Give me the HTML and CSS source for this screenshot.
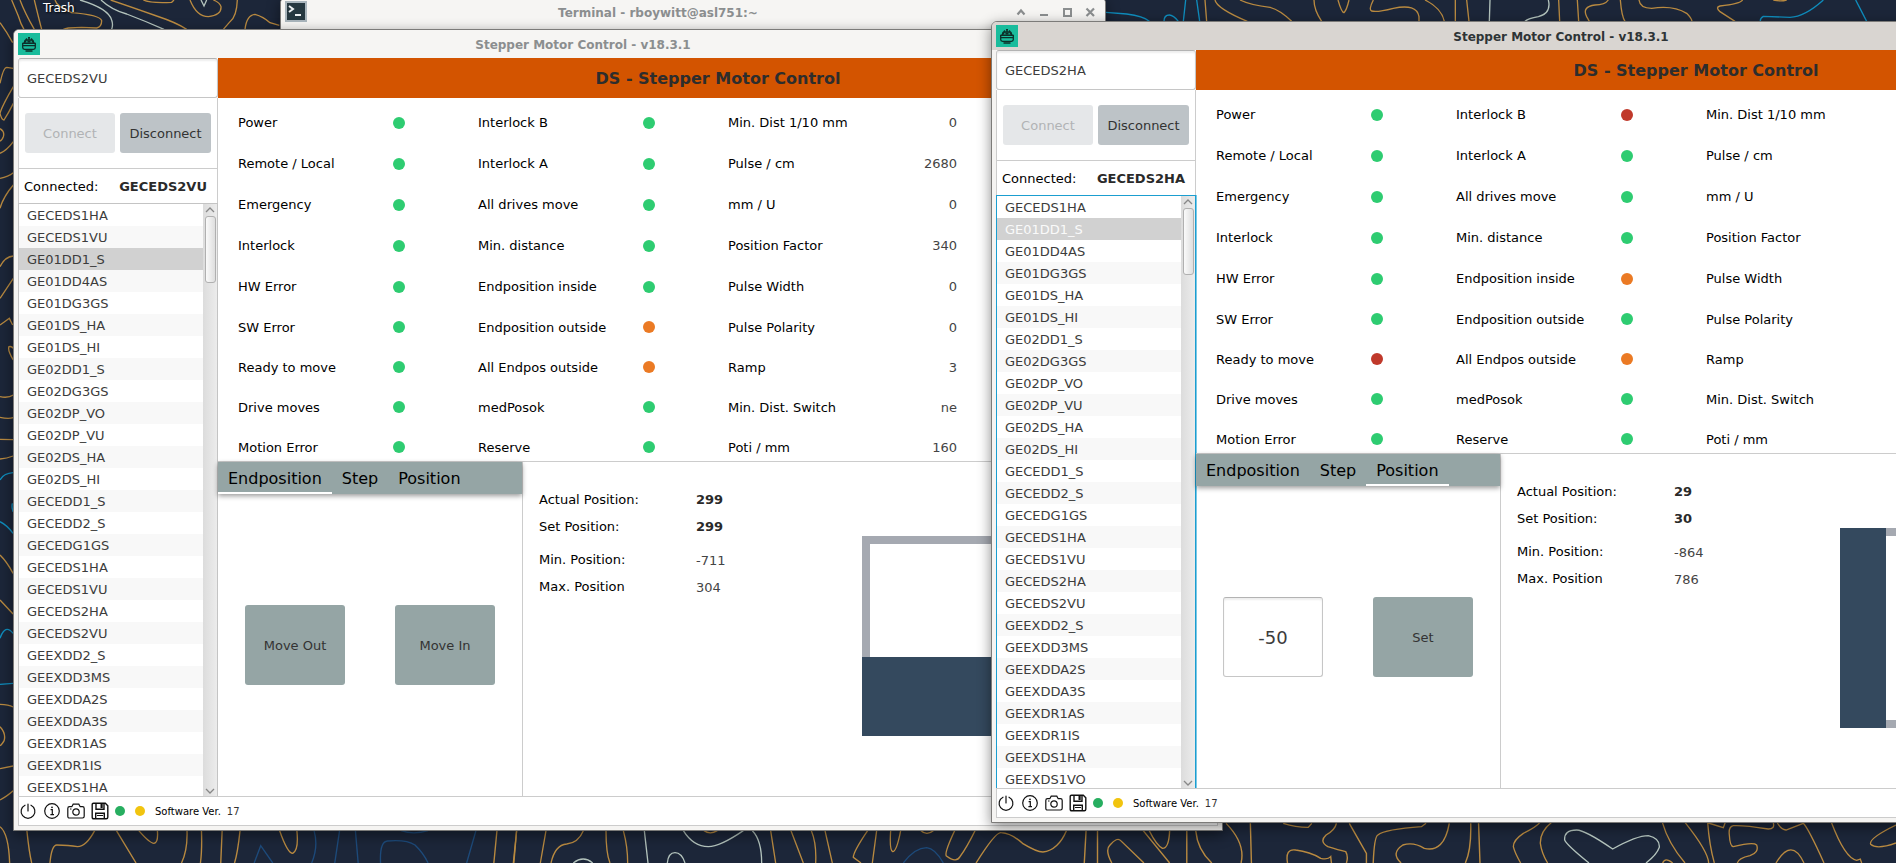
FILE: index.html
```html
<!DOCTYPE html>
<html lang="en">
<head>
<meta charset="utf-8">
<title>Stepper Motor Control</title>
<link rel="stylesheet" href="styles.css">
</head>
<body>
<svg class="symbols" aria-hidden="true">
  <symbol id="i-app" viewBox="0 0 22 22"><path fill="#1abc9c" d="M0 0h22v22H0z"/><g fill="none" stroke="#0c2f29" stroke-width="1.3"><path d="M11 4v3M8.500 5.200v1.600M13.500 5.200v1.600M6 10l1.500-3.200h7L16 10M4.700 10.300h12.600v4.200q0 1.800-1.800 1.800h-9q-1.800 0-1.800-1.800zM5 12.600h12M7.500 18h7"/></g><path fill="#0c2f29" d="M6.500 7.300h9l.8 2.400H5.700zM10 4h2v1.400h-2z"/><path stroke="#1abc9c" stroke-width="1" d="M8 8.800h1.600M12.400 8.800h1.600"/></symbol>
  <symbol id="i-up" viewBox="0 0 10 6"><path fill="none" stroke="#888" stroke-width="1.3" d="M1 5l4-4 4 4"/></symbol>
  <symbol id="i-down" viewBox="0 0 10 6"><path fill="none" stroke="#888" stroke-width="1.3" d="M1 1l4 4 4-4"/></symbol>
  <symbol id="i-shade" viewBox="0 0 10 10"><path fill="none" stroke="currentColor" stroke-width="2.200" d="M1.500 7.500L5 3.500l3.500 4"/></symbol>
  <symbol id="i-min" viewBox="0 0 10 10"><path fill="none" stroke="currentColor" stroke-width="2" d="M1 8h8"/></symbol>
  <symbol id="i-max" viewBox="0 0 10 10"><path fill="none" stroke="currentColor" stroke-width="2" d="M2 2h7v7H2z"/></symbol>
  <symbol id="i-close" viewBox="0 0 10 10"><path fill="none" stroke="currentColor" stroke-width="2.200" d="M1.500 1.500l7.500 7.500M9 1.500L1.500 9"/></symbol>
  <symbol id="i-power" viewBox="0 0 18 18"><path fill="none" stroke="#111" stroke-width="1.200" stroke-linecap="round" d="M9 2v7M6 3.200a6.900 6.900 0 1 0 6 0"/></symbol>
  <symbol id="i-info" viewBox="0 0 18 18"><g fill="none" stroke="#111" stroke-width="1.200"><circle cx="9" cy="9" r="7.300"/><path d="M7.600 7.600h1.700v5M7.400 12.700h3.600"/></g><circle cx="9" cy="5.300" r=".9" fill="#111"/></symbol>
  <symbol id="i-camera" viewBox="0 0 18 18"><g fill="none" stroke="#111" stroke-width="1.200"><path d="M2.500 4.700h2.300l1.400-2.500h5.600l1.400 2.500h2.300q1.700 0 1.700 1.700v7.900q0 1.700-1.700 1.700h-13Q.8 16 .8 14.300V6.400q0-1.700 1.700-1.700z"/><circle cx="9" cy="10" r="3.200"/><path d="M3 7h1.500"/></g></symbol>
  <symbol id="i-save" viewBox="0 0 18 18"><g fill="none" stroke="#111" stroke-width="1.400"><path d="M2.500 1.200h11.800l2.500 2.500v11.600q0 1.500-1.500 1.500H2.700q-1.500 0-1.500-1.500V2.500q0-1.300 1.300-1.300zM5 1.500v5.700h8V1.500M4.700 16.500v-5.300h8.600v5.300"/></g><path fill="#111" d="M9.500 2h2.200v4H9.500zM6 13h6v1H6z"/></symbol>
</svg>

<main class="desktop">
  <svg class="wallpaper" viewBox="0 0 1896 863" preserveAspectRatio="xMidYMid slice" aria-hidden="true">
    <g transform="scale(.33333)">
      <path class="amber" d="M0 68Q20 95 38 128M35 0L55 48Q62 72 72 88M60 0Q75 40 103 88M103 0Q115 50 125 88M165 0Q170 20 215 38Q300 45 305 62Q305 80 290 84L245 82 205 84Q195 86 190 88M332 0Q420 30 470 48 530 68 560 88M430 0Q450 10 515 7L522 0M570 0Q590 50 625 50 665 45 663 20 660 8 640 0M712 0Q710 50 690 65L670 88M735 88Q740 45 765 43 790 50 810 68L838 76"/>
      <path class="amber" d="M40 205L20 202Q10 202 0 250M40 260Q5 320 0 340 5 360 12 360 25 340 40 310M0 386Q15 395 10 410 5 422 0 423M0 460Q20 452 40 425M0 535Q25 530 40 518M0 625Q10 590 40 555M0 800Q15 770 40 768M0 895L40 835M0 975Q15 965 28 955L38 975M40 1080Q22 1050 27 1040 35 1038 40 1045M0 1190Q25 1195 40 1185M0 1252Q25 1258 40 1253"/>
      <path class="pale" d="M240 0Q325 25 335 60 340 75 335 88M303 0Q335 30 380 42 440 65 492 88M603 0L612 18 620 0"/>
    </g>
    <g transform="translate(0 420) scale(.34439 .33333)">
      <path class="amber" d="M0 58L38 59M0 117Q20 115 38 108M0 405Q20 425 38 460M0 540L38 582M0 853Q25 853 38 861M0 920Q18 940 12 962 5 975 0 977M0 1046L38 1038M0 1140Q25 1125 38 1112M0 1220Q25 1240 28 1329M78 1232Q85 1300 92 1329M145 1329Q150 1275 165 1275 200 1275 225 1280 250 1280 275 1232M338 1232L395 1329M403 1232Q435 1270 447 1270 460 1268 457 1232M527 1329Q545 1290 543 1232M585 1232Q587 1290 582 1329M645 1232L641 1329M697 1232Q690 1300 681 1329M812 1232Q835 1300 850 1300 868 1290 862 1232M1443 1232L1434 1329M1500 1232L1492 1329"/>
      <path class="cyan" d="M0 180Q10 160 38 158M36 250Q33 260 38 275M0 305Q20 315 38 340M0 655Q15 610 38 640M0 793L38 790"/>
      <path class="blue" d="M738 1329L757 1277 792 1329M912 1232Q925 1280 905 1329M986 1232L972 1329M1032 1232L1040 1329M1105 1329Q1102 1265 1125 1263 1180 1258 1205 1275 1230 1300 1243 1329M1165 1232Q1200 1245 1243 1232M1382 1232L1355 1329"/>
    </g>
    <g transform="translate(500 420) scale(.33333)">
      <path class="amber" d="M50 1232L40 1329M138 1232L121 1329M153 1329Q165 1275 200 1272 235 1268 250 1232M318 1232Q318 1300 330 1329M370 1232Q383 1280 383 1329M612 1232Q630 1245 652 1232M812 1232L827 1329M873 1232L910 1329M934 1232Q950 1270 947 1329M975 1232L997 1329M1103 1232Q1060 1295 1060 1312L1083 1329M1130 1232L1117 1329M1172 1232Q1168 1290 1178 1295 1190 1295 1202 1232M1263 1232Q1280 1248 1300 1232"/>
      <path class="pale" d="M433 1232L444 1329M220 1329Q250 1305 278 1329M550 1232Q580 1280 625 1280 660 1280 730 1232M757 1232Q785 1260 785 1329M502 1329Q505 1298 525 1298 545 1298 555 1329"/>
      <path class="blue" d="M1210 1329Q1245 1283 1280 1283 1305 1285 1330 1329"/>
    </g>
    <g transform="translate(960 420) scale(.35714 .33333)">
      <path class="amber" d="M0 1310Q20 1280 42 1232M-15 1232Q-45 1300-38 1308-10 1330 0 1310M45 1329Q100 1235 115 1238 145 1240 175 1270 215 1296 232 1296 275 1290 298 1232M353 1232L348 1329M385 1232V1329M425 1329Q405 1290 420 1275 440 1250 450 1262L515 1329M513 1232L587 1329M530 1232Q550 1275 567 1285 585 1285 587 1232M635 1232V1329M660 1232Q665 1290 705 1329M745 1210Q800 1270 787 1329M813 1210L816 1329M905 1210Q940 1222 975 1222L985 1210M917 1329Q910 1285 940 1290 980 1295 1010 1315 1030 1320 1038 1310L1040 1329M1054 1210Q1050 1230 1025 1245 1005 1265 1030 1280 1060 1290 1080 1295 1088 1310 1082 1329M1090 1210L1138 1300V1329M1157 1329Q1160 1250 1170 1245 1190 1228 1292 1220L1305 1210M1235 1329Q1205 1300 1240 1275 1270 1265 1300 1285 1355 1300 1370 1210M1430 1210Q1432 1290 1415 1329M1452 1210L1456 1329"/>
    </g>
    <g transform="translate(1380 815) scale(.33333)">
      <path class="amber" d="M480 22Q470 35 430 55 400 75 400 95 405 115 422 144M515 22Q480 50 481 85 485 115 503 144M847 22Q865 85 915 144M915 22Q985 110 986 144M983 22Q988 90 1003 144M985 24L1030 38 1036 22M1180 24Q1185 42 1165 42 1090 30 1060 32 1045 35 1048 60 1050 95 1060 95 1120 80 1130 90 1138 112 1110 122 1075 130 1072 144M1192 24Q1205 45 1218 45L1270 25Q1285 40 1332 144M1188 144Q1235 65 1272 144M1354 22Q1395 130 1430 136L1441 132 1445 144M1548 30Q1465 70 1472 88 1490 105 1548 84M848 144Q855 125 878 144"/>
      <path class="pale" d="M627 144Q560 90 554 75 552 45 590 45 615 45 698 102 770 62 805 62 840 70 838 97 830 120 798 144"/>
    </g>
    <g transform="translate(960) scale(.33333)">
      <path class="amber" d="M735 0L740 64M765 0Q770 25 862 64M840 0Q870 15 930 22 960 30 995 64M1062 0Q1062 30 1085 64M1134 0Q1145 38 1152 38 1160 30 1167 0M1240 0Q1225 30 1235 33 1250 38 1300 25 1370 10 1377 50V64M1395 0Q1445 25 1453 64"/>
      <path class="cyan" d="M438 37L500 42Q550 48 568 64M612 64Q612 45 628 45 640 45 655 64M677 0L670 64M710 0L719 64"/>
    </g>
    <g transform="translate(1440) scale(.33333)">
      <path class="amber" d="M46 0V64M80 0L87 64M356 0L359 64M412 0L416 64M505 0Q495 15 465 15 425 20 440 50L448 64M541 0Q545 50 555 64M597 0Q600 25 635 25 700 15 740 40 755 55 756 64M908 0Q900 12 840 18 825 22 840 35L885 64M1000 0Q1022 5 1040 0"/>
      <path class="pale" d="M150 0L148 64M325 0Q335 40 295 50 265 55 255 64"/>
      <path class="cyan" d="M1150 0Q1095 50 1050 52L970 49Q960 55 961 64M1247 0L1280 64"/>
    </g>
  </svg>

  <a class="desktop-item" href="#trash">Trash</a>

  <section class="window window-terminal" aria-label="Terminal">
    <header class="titlebar">
      <svg class="title-icon" viewBox="0 0 22 22" aria-hidden="true"><path fill="#263840" stroke="#a9b5bc" stroke-width="2" d="M1 1h20v19H1z"/><path fill="none" stroke="#eef1f2" stroke-width="2" d="M4 5l4 3-4 3M10 14h6"/></svg>
      <h2 class="title">Terminal - rboywitt@asl751:~</h2>
      <div class="controls">
        <button aria-label="Shade"><svg><use href="#i-shade"/></svg></button>
        <button aria-label="Minimize"><svg><use href="#i-min"/></svg></button>
        <button aria-label="Maximize"><svg><use href="#i-max"/></svg></button>
        <button aria-label="Close"><svg><use href="#i-close"/></svg></button>
      </div>
    </header>
  </section>

  <section class="window window-vu" aria-label="Stepper Motor Control GECEDS2VU">
    <header class="titlebar">
      <svg class="title-icon" aria-hidden="true"><use href="#i-app"/></svg>
      <h2 class="title">Stepper Motor Control - v18.3.1</h2>
      <div class="controls"></div>
    </header>
    <div class="content">
      <aside class="sidebar">
        <input class="entry" type="text" value="GECEDS2VU" aria-label="Device">
        <div class="actions">
          <button class="btn btn-silver" disabled>Connect</button>
          <button class="btn btn-silver">Disconnect</button>
        </div>
        <div class="connected"><span>Connected:</span><strong>GECEDS2VU</strong></div>
        <div class="devices">
          <ul class="device-list" role="listbox" aria-label="Devices">
            <li role="option">GECEDS1HA</li>
            <li role="option">GECEDS1VU</li>
            <li role="option" class="current" aria-selected="true">GE01DD1_S</li>
            <li role="option">GE01DD4AS</li>
            <li role="option">GE01DG3GS</li>
            <li role="option">GE01DS_HA</li>
            <li role="option">GE01DS_HI</li>
            <li role="option">GE02DD1_S</li>
            <li role="option">GE02DG3GS</li>
            <li role="option">GE02DP_VO</li>
            <li role="option">GE02DP_VU</li>
            <li role="option">GE02DS_HA</li>
            <li role="option">GE02DS_HI</li>
            <li role="option">GECEDD1_S</li>
            <li role="option">GECEDD2_S</li>
            <li role="option">GECEDG1GS</li>
            <li role="option">GECEDS1HA</li>
            <li role="option">GECEDS1VU</li>
            <li role="option">GECEDS2HA</li>
            <li role="option">GECEDS2VU</li>
            <li role="option">GEEXDD2_S</li>
            <li role="option">GEEXDD3MS</li>
            <li role="option">GEEXDDA2S</li>
            <li role="option">GEEXDDA3S</li>
            <li role="option">GEEXDR1AS</li>
            <li role="option">GEEXDR1IS</li>
            <li role="option">GEEXDS1HA</li>
          </ul>
          <div class="scrollbar" aria-hidden="true"><svg><use href="#i-up"/></svg><div class="track"><div class="thumb"></div></div><svg><use href="#i-down"/></svg></div>
        </div>
      </aside>
      <div class="panel">
        <h1 class="banner">DS - Stepper Motor Control</h1>
        <div class="status-grid">
          <span>Power</span><i class="led green"></i><span>Interlock B</span><i class="led green"></i><span>Min. Dist 1/10 mm</span><output>0</output>
          <span>Remote / Local</span><i class="led green"></i><span>Interlock A</span><i class="led green"></i><span>Pulse / cm</span><output>2680</output>
          <span>Emergency</span><i class="led green"></i><span>All drives move</span><i class="led green"></i><span>mm / U</span><output>0</output>
          <span>Interlock</span><i class="led green"></i><span>Min. distance</span><i class="led green"></i><span>Position Factor</span><output>340</output>
          <span>HW Error</span><i class="led green"></i><span>Endposition inside</span><i class="led green"></i><span>Pulse Width</span><output>0</output>
          <span>SW Error</span><i class="led green"></i><span>Endposition outside</span><i class="led orange"></i><span>Pulse Polarity</span><output>0</output>
          <span>Ready to move</span><i class="led green"></i><span>All Endpos outside</span><i class="led orange"></i><span>Ramp</span><output>3</output>
          <span>Drive moves</span><i class="led green"></i><span>medPosok</span><i class="led green"></i><span>Min. Dist. Switch</span><output>ne</output>
          <span>Motion Error</span><i class="led green"></i><span>Reserve</span><i class="led green"></i><span>Poti / mm</span><output>160</output>
        </div>
        <div class="lower">
          <section class="motion">
            <div class="tabs" role="tablist">
              <button role="tab" aria-selected="true">Endposition</button>
              <button role="tab" aria-selected="false">Step</button>
              <button role="tab" aria-selected="false">Position</button>
            </div>
            <div class="moves">
              <button class="btn btn-move">Move Out</button>
              <button class="btn btn-move">Move In</button>
            </div>
          </section>
          <section class="position">
            <div class="readouts">
              <dl class="live">
                <dt>Actual Position:</dt><dd>299</dd>
                <dt>Set Position:</dt><dd>299</dd>
              </dl>
              <dl class="limits">
                <dt>Min. Position:</dt><dd>-711</dd>
                <dt>Max. Position</dt><dd>304</dd>
              </dl>
            </div>
            <svg class="gauge" viewBox="0 0 200 200" role="img" aria-label="Vertical slit position"><path fill="none" stroke="#a5a9b1" stroke-width="8" d="M4 4h192v192H4z"/><path fill="#34495e" d="M0 121h200v79H0z"/></svg>
          </section>
        </div>
      </div>
      <footer class="statusbar">
        <button aria-label="Power"><svg><use href="#i-power"/></svg></button>
        <button aria-label="Info"><svg><use href="#i-info"/></svg></button>
        <button aria-label="Screenshot"><svg><use href="#i-camera"/></svg></button>
        <button aria-label="Save"><svg><use href="#i-save"/></svg></button>
        <i class="lamp emerald"></i><i class="lamp yellow"></i>
        <span>Software Ver.</span><output>17</output>
      </footer>
    </div>
  </section>

  <section class="window window-ha active" aria-label="Stepper Motor Control GECEDS2HA">
    <header class="titlebar">
      <svg class="title-icon" aria-hidden="true"><use href="#i-app"/></svg>
      <h2 class="title">Stepper Motor Control - v18.3.1</h2>
      <div class="controls"></div>
    </header>
    <div class="content">
      <aside class="sidebar">
        <input class="entry" type="text" value="GECEDS2HA" aria-label="Device">
        <div class="actions">
          <button class="btn btn-silver" disabled>Connect</button>
          <button class="btn btn-silver">Disconnect</button>
        </div>
        <div class="connected"><span>Connected:</span><strong>GECEDS2HA</strong></div>
        <div class="devices focused">
          <ul class="device-list" role="listbox" aria-label="Devices">
            <li role="option">GECEDS1HA</li>
            <li role="option" class="current" aria-selected="true">GE01DD1_S</li>
            <li role="option">GE01DD4AS</li>
            <li role="option">GE01DG3GS</li>
            <li role="option">GE01DS_HA</li>
            <li role="option">GE01DS_HI</li>
            <li role="option">GE02DD1_S</li>
            <li role="option">GE02DG3GS</li>
            <li role="option">GE02DP_VO</li>
            <li role="option">GE02DP_VU</li>
            <li role="option">GE02DS_HA</li>
            <li role="option">GE02DS_HI</li>
            <li role="option">GECEDD1_S</li>
            <li role="option">GECEDD2_S</li>
            <li role="option">GECEDG1GS</li>
            <li role="option">GECEDS1HA</li>
            <li role="option">GECEDS1VU</li>
            <li role="option">GECEDS2HA</li>
            <li role="option">GECEDS2VU</li>
            <li role="option">GEEXDD2_S</li>
            <li role="option">GEEXDD3MS</li>
            <li role="option">GEEXDDA2S</li>
            <li role="option">GEEXDDA3S</li>
            <li role="option">GEEXDR1AS</li>
            <li role="option">GEEXDR1IS</li>
            <li role="option">GEEXDS1HA</li>
            <li role="option">GEEXDS1VO</li>
          </ul>
          <div class="scrollbar" aria-hidden="true"><svg><use href="#i-up"/></svg><div class="track"><div class="thumb"></div></div><svg><use href="#i-down"/></svg></div>
        </div>
      </aside>
      <div class="panel">
        <h1 class="banner">DS - Stepper Motor Control</h1>
        <div class="status-grid">
          <span>Power</span><i class="led green"></i><span>Interlock B</span><i class="led red"></i><span>Min. Dist 1/10 mm</span><output></output>
          <span>Remote / Local</span><i class="led green"></i><span>Interlock A</span><i class="led green"></i><span>Pulse / cm</span><output></output>
          <span>Emergency</span><i class="led green"></i><span>All drives move</span><i class="led green"></i><span>mm / U</span><output></output>
          <span>Interlock</span><i class="led green"></i><span>Min. distance</span><i class="led green"></i><span>Position Factor</span><output></output>
          <span>HW Error</span><i class="led green"></i><span>Endposition inside</span><i class="led orange"></i><span>Pulse Width</span><output></output>
          <span>SW Error</span><i class="led green"></i><span>Endposition outside</span><i class="led green"></i><span>Pulse Polarity</span><output></output>
          <span>Ready to move</span><i class="led red"></i><span>All Endpos outside</span><i class="led orange"></i><span>Ramp</span><output></output>
          <span>Drive moves</span><i class="led green"></i><span>medPosok</span><i class="led green"></i><span>Min. Dist. Switch</span><output></output>
          <span>Motion Error</span><i class="led green"></i><span>Reserve</span><i class="led green"></i><span>Poti / mm</span><output></output>
        </div>
        <div class="lower">
          <section class="motion">
            <div class="tabs" role="tablist">
              <button role="tab" aria-selected="false">Endposition</button>
              <button role="tab" aria-selected="false">Step</button>
              <button role="tab" aria-selected="true">Position</button>
            </div>
            <div class="moves">
              <input class="target" type="text" value="-50" aria-label="Target position">
              <button class="btn btn-move">Set</button>
            </div>
          </section>
          <section class="position">
            <div class="readouts">
              <dl class="live">
                <dt>Actual Position:</dt><dd>29</dd>
                <dt>Set Position:</dt><dd>30</dd>
              </dl>
              <dl class="limits">
                <dt>Min. Position:</dt><dd>-864</dd>
                <dt>Max. Position</dt><dd>786</dd>
              </dl>
            </div>
            <svg class="gauge" viewBox="0 0 200 200" role="img" aria-label="Horizontal slit position"><path fill="none" stroke="#a5a9b1" stroke-width="8" d="M4 4h192v192H4z"/><path fill="#34495e" d="M0 0h46v200H0z"/></svg>
          </section>
        </div>
      </div>
      <footer class="statusbar">
        <button aria-label="Power"><svg><use href="#i-power"/></svg></button>
        <button aria-label="Info"><svg><use href="#i-info"/></svg></button>
        <button aria-label="Screenshot"><svg><use href="#i-camera"/></svg></button>
        <button aria-label="Save"><svg><use href="#i-save"/></svg></button>
        <i class="lamp emerald"></i><i class="lamp yellow"></i>
        <span>Software Ver.</span><output>17</output>
      </footer>
    </div>
  </section>
</main>
</body>
</html>
```

FILE: styles.css
```css
* { box-sizing: border-box; }

body, h1, h2, ul, dl, dd { margin: 0; padding: 0; }

body, button, input {
  font-family: "DejaVu Sans", sans-serif;
  font-size: 13px;
}

button { border: 0; padding: 0; background: none; color: inherit; }

.symbols { display: none; }

/* Desktop */
.desktop {
  position: relative;
  height: 100vh;
  overflow: hidden;
  background: #1c2639;
}
.wallpaper { display: block; width: 100%; height: 100%; }
.wallpaper path { fill: none; stroke-width: 4; }
.wallpaper .amber { stroke: #b98a40; }
.wallpaper .pale { stroke: #b3c3bc; }
.wallpaper .cyan { stroke: #0f8dbd; }
.wallpaper .blue { stroke: #1d4a7a; }

.desktop-item {
  position: absolute;
  top: 0;
  left: 43px;
  font-size: 12px;
  line-height: 16px;
  color: #fff;
  text-decoration: none;
  text-shadow: 1px 1px 2px #000;
}

/* Window frames */
.window {
  position: absolute;
  display: flex;
  flex-direction: column;
  width: calc(100vw - 686px);
  height: calc(100vh - 61px);
  padding: 0 4px 4px;
  border: 1px solid #7c7b79;
  border-radius: 6px 6px 0 0;
  background: #f5f4f2;
  box-shadow: 0 4px 14px rgba(0, 0, 0, .45);
}
.window-terminal { top: -3px; left: 280px; width: 826px; height: 60px; }
.window-vu { top: 29px; left: 13px; }
.window-ha { top: 21px; left: 991px; }

.titlebar {
  flex: none;
  display: flex;
  align-items: center;
  height: 28px;
  margin: 0 -4px;
  padding: 0 4px;
  border-radius: 5px 5px 0 0;
  background: #f6f5f3;
  color: #8b8e8f;
}
.active .titlebar { background: #d9d5d1; color: #2e3436; }
.title-icon { width: 22px; height: 22px; }
.title { flex: 1; padding-top: 2px; font-size: 12px; line-height: 16px; text-align: center; }
.controls { display: flex; width: 92px; }
.controls button { flex: 1; display: grid; place-items: center; height: 22px; }
.controls svg { width: 10px; height: 10px; }

.content {
  flex: 1;
  display: grid;
  grid-template: minmax(0, 1fr) 30px / 200px minmax(0, 1fr);
  min-height: 0;
  background: #fff;
}

/* Sidebar */
.sidebar { display: flex; flex-direction: column; min-height: 0; }
.entry, .target {
  border: 1px solid #c6c6c6;
  border-top-color: #b3b3b3;
  border-radius: 3px;
  background: #fff;
  color: #3c3c3c;
  box-shadow: inset 0 2px 2px #eee;
}
.entry { flex: none; width: 100%; height: 40px; padding: 0 8px; }
.actions {
  flex: none;
  display: grid;
  grid-template-columns: 90px 1fr;
  gap: 5px;
  height: 71px;
  padding: 15px 6px;
  border: solid #ccc;
  border-width: 0 1px 1px;
}
.btn { border-radius: 3px; color: #333; }
.btn-silver { height: 40px; background: #bdc3c7; }
.btn-silver:disabled { background: #e5e7e9; color: #b1b3b5; }
.connected {
  flex: none;
  display: flex;
  align-items: center;
  justify-content: space-between;
  height: 34px;
  padding: 0 10px 0 5px;
  border: solid #ccc;
  border-width: 0 1px;
  color: #000;
}
.connected strong { color: #2a2a2a; }
.devices {
  flex: 1;
  display: flex;
  min-height: 0;
  border: solid #c4c4c4;
  border-width: 1px 1px 0;
}
.devices.focused { border-color: #1b9ed0; box-shadow: 1px 0 #7cc8e6; }
.device-list { flex: 1; overflow: hidden; list-style: none; }
.device-list li { padding: 2px 0 0 8px; line-height: 20px; color: #3c3c3c; }
.device-list li:nth-child(even) { background: #f8f8f8; }
.device-list li.current { background: #d1d1d1; }
.focused .device-list li.current { color: #fafafa; }
.scrollbar {
  display: flex;
  flex-direction: column;
  align-items: center;
  width: 14px;
  padding: 3px 0 2px;
  background: linear-gradient(90deg, #dcdcdc, #ececec);
}
.scrollbar svg { width: 10px; height: 6px; }
.track { flex: 1; padding: 3px 0; }
.thumb {
  width: 11px;
  height: 67px;
  border: 1px solid #b0b0b0;
  border-radius: 3px;
  background: linear-gradient(90deg, #fafafa, #dedede);
}

/* Main panel */
.panel { display: flex; flex-direction: column; min-height: 0; }
.banner {
  flex: none;
  padding-top: 2px;
  background: #d35400;
  color: #2d2d2d;
  font-size: 16px;
  line-height: 38px;
  text-align: center;
}
.status-grid {
  flex: none;
  display: grid;
  grid-template-columns: 155px 85px 165px 85px 165px 64px;
  grid-template-rows: repeat(5, 41px) repeat(4, 40px);
  align-items: center;
  height: 364px;
  padding: 4px 0 0 20px;
  border-bottom: 1px solid #ccc;
  overflow: hidden;
  color: #000;
}
.status-grid output { color: #444; text-align: right; }
.led { width: 12px; height: 12px; border-radius: 50%; }
.green { background: #2ecc71; }
.orange { background: #eb7a24; }
.red { background: #c0392b; }

.lower { flex: 1; display: flex; min-height: 0; }
.motion {
  display: flex;
  flex-direction: column;
  width: 305px;
  border-right: 1px solid #ccc;
}
.tabs { display: flex; background: #95a5a5; box-shadow: 0 2px 5px rgba(0, 0, 0, .4); }
.tabs button {
  height: 32px;
  padding: 0 10px;
  border: solid transparent;
  border-width: 2px 0;
  font-size: 16px;
  color: #000;
}
.tabs button[aria-selected="true"] { border-bottom-color: #fff; }
.moves {
  flex: 1;
  display: grid;
  grid-template-columns: 1fr 1fr;
  place-items: center;
  padding: 0 2px;
}
.btn-move, .target { width: 100px; height: 80px; }
.btn-move { background: #95a5a5; }
.target { font-size: 18px; text-align: center; }

.position { display: flex; }
.readouts { width: 339px; padding: 24px 0 0 16px; color: #000; }
.readouts dl {
  display: grid;
  grid-template-columns: 157px 1fr;
  grid-auto-rows: 27px;
  line-height: 27px;
}
.live dd { font-weight: bold; color: #2a2a2a; }
.limits { padding-top: 6px; }
.limits dd { line-height: 30px; color: #444; }
.gauge { width: 200px; height: 200px; margin-top: 74px; }

/* Status bar */
.statusbar {
  grid-column: 1 / -1;
  display: flex;
  align-items: center;
  gap: 6px;
  border: 1px solid #ccc;
  font-size: 10px;
  color: #000;
}
.statusbar button { display: grid; place-items: center; width: 18px; height: 28px; }
.statusbar svg { width: 18px; height: 18px; }
.lamp { width: 10px; height: 10px; border-radius: 50%; }
.lamp + .lamp, .statusbar span { margin-left: 4px; }
.emerald { background: #27ae60; }
.yellow { background: #f1c40f; }
.statusbar output { color: #333; }
```
